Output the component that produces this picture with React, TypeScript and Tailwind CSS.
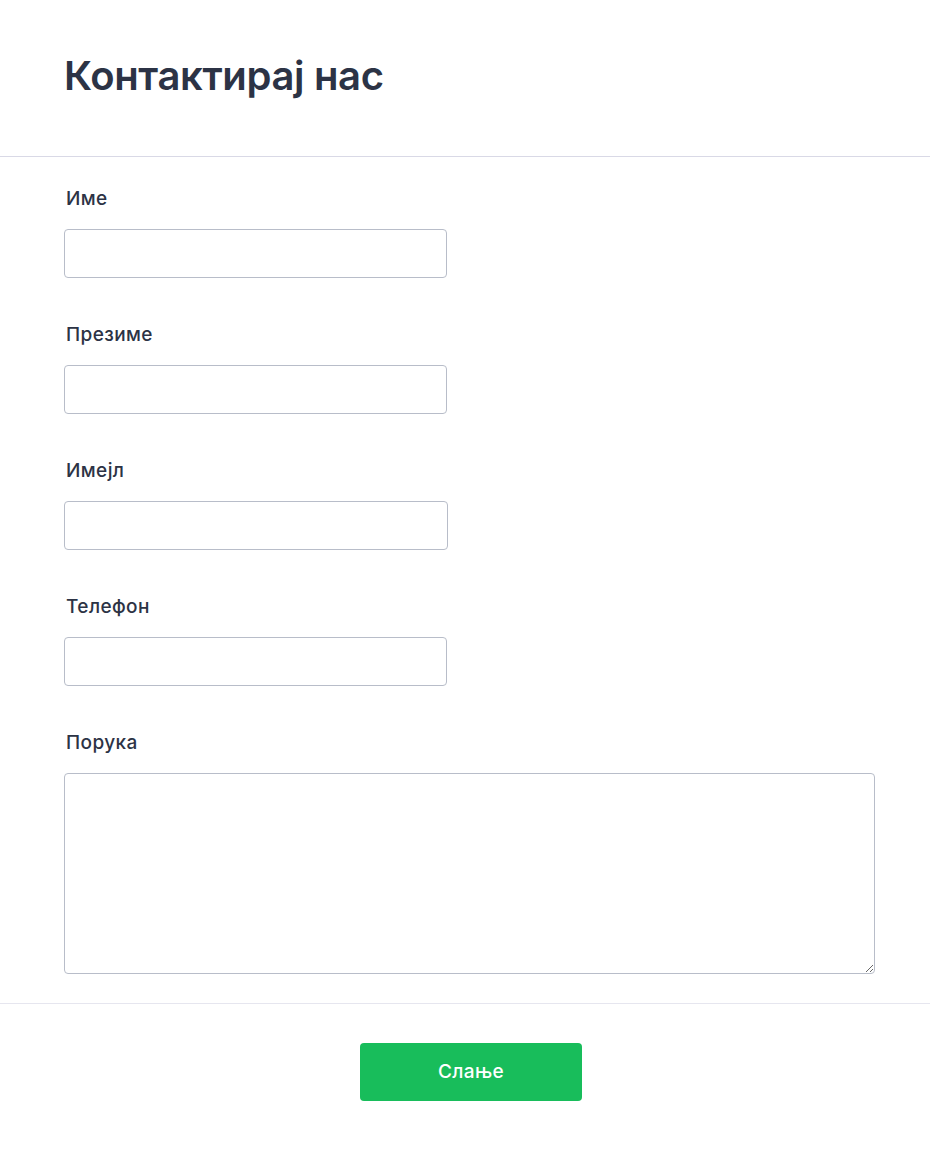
import React from 'react';

const fields = [
    { label: 'Име', width: 'w-[383px]' },
    { label: 'Презиме', width: 'w-[383px]' },
    { label: 'Имејл', width: 'w-[384px]' },
    { label: 'Телефон', width: 'w-[383px]' },
];

const Field = ({ label, width }: { label: string; width: string }) => (
    <div className="flex flex-col">
        <label className="ml-[2px] text-[19px] leading-[24px] font-[450] tracking-[0.4px] text-[#2c3345]">{label}</label>
        <input
            type="text"
            className={`${width} mt-[18px] h-[49px] rounded-[4px] border border-[#b8bdc9] bg-white outline-none`}
        />
    </div>
);

export default function App() {
    return (
        <div className="min-h-[1151px] bg-white" style={{ fontFamily: 'Inter, "Noto Sans", sans-serif' }}>
            <div className="h-[157px] border-b border-[#d9d9e6] pl-[64px] pt-[52px]">
                <h1 className="text-[40px] leading-[48px] font-semibold tracking-[-0.35px] text-[#2c3345]">Контактирај нас</h1>
            </div>

            <div className="flex flex-col gap-[45px] pl-[64px] pt-[30px] pb-[29px]">
                {fields.map((f) => (
                    <Field key={f.label} label={f.label} width={f.width} />
                ))}
                <div className="flex flex-col">
                    <label className="ml-[2px] text-[19px] leading-[24px] font-[450] tracking-[0.4px] text-[#2c3345]">Порука</label>
                    <textarea className="mt-[18px] h-[201px] w-[811px] rounded-[4px] border border-[#b8bdc9] bg-white outline-none" />
                </div>
            </div>

            <div className="flex justify-center border-t border-[#e6e6ef] pt-[39px] pl-[66px] pr-[54px]">
                <button className="h-[58px] w-[222px] rounded-[4px] bg-[#18bd5b] text-[19px] font-[450] tracking-[0.4px] text-white">
                    Слање
                </button>
            </div>
        </div>
    );
}
